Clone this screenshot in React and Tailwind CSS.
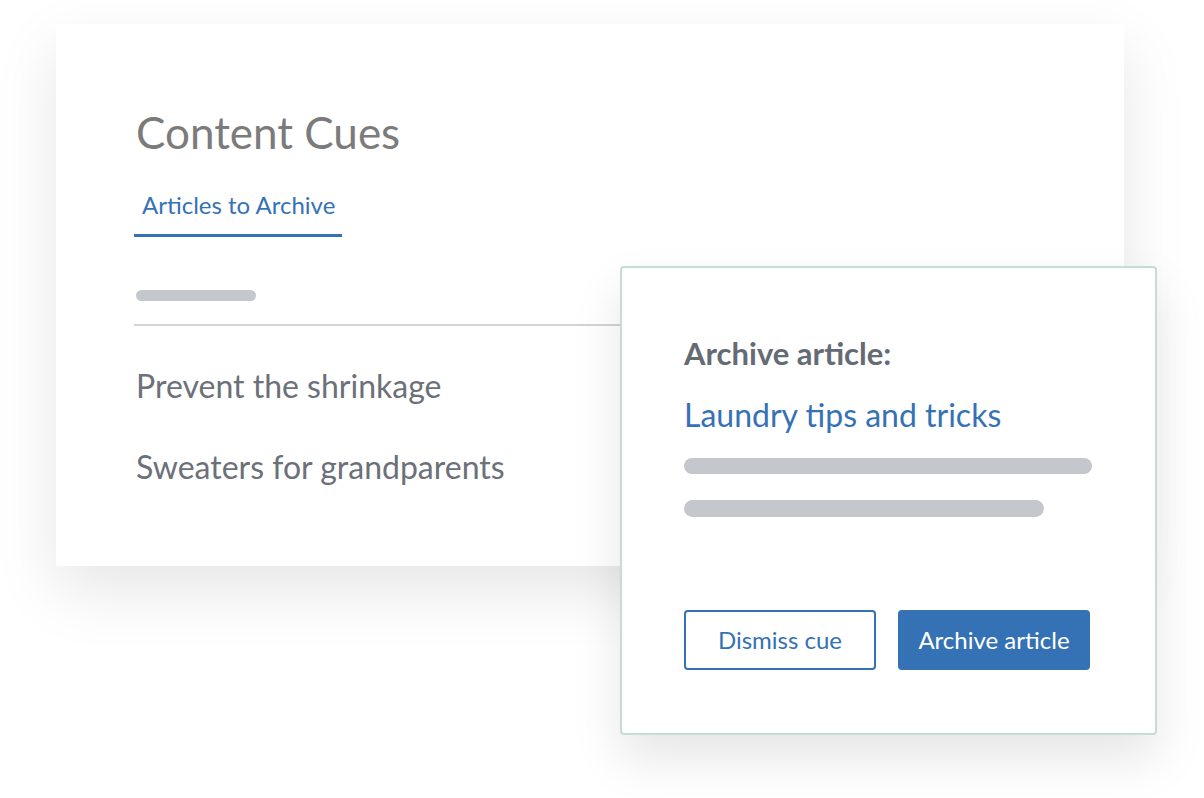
import React from "react";

export default function App() {
  return (
    <div className="relative w-[1204px] h-[798px] bg-white overflow-hidden" style={{ fontFamily: "Lato, 'Open Sans', sans-serif" }}>
      <div className="ml-[56px] mt-[24px] w-[1068px] h-[542px] bg-white shadow-[0_24px_60px_rgba(0,0,0,0.10)] pl-[80px] pt-[82px]">
        <h1 className="text-[44px] leading-[52px] text-[#7b7b7b] font-normal">Content Cues</h1>
        <div className="mt-[33px] w-[208px] -ml-[2px] border-b-[3px] border-[#3572b5] pb-[15px] pl-[8px]">
          <span className="block text-[24px] leading-[28px] text-[#3572b5]">Articles to Archive</span>
        </div>
        <div className="mt-[53px] w-[120px] h-[11px] rounded-full bg-[#c4c8cc]" />
        <div className="mt-[23px] w-[486px] -ml-[2px] h-[2px] bg-[#d3d3d3]" />
        <div className="mt-[41px] text-[32px] leading-[38px] text-[#6b7079]">Prevent the shrinkage</div>
        <div className="mt-[43px] text-[32px] leading-[38px] text-[#6b7079]">Sweaters for grandparents</div>
      </div>

      <div className="absolute left-[620px] top-[266px] w-[537px] h-[469px] bg-white border-2 border-[#c5ddd9] rounded-[4px] shadow-[0_24px_50px_rgba(0,0,0,0.10)] pl-[62px] pt-[66px]">
        <div className="text-[31px] leading-[38px] font-bold text-[#656b74]">Archive article:</div>
        <div className="mt-[24px] text-[32px] leading-[38px] text-[#3572b5]">Laundry tips and tricks</div>
        <div className="mt-[24px] w-[408px] h-[16px] rounded-full bg-[#c4c8cc]" />
        <div className="mt-[26px] w-[360px] h-[17px] rounded-full bg-[#c4c8cc]" />
        <div className="mt-[93px] flex gap-[22px]">
          <button className="w-[192px] h-[60px] border-2 border-[#3572b5] rounded-[4px] text-[24px] text-[#3572b5] bg-white">Dismiss cue</button>
          <button className="w-[192px] h-[60px] rounded-[4px] text-[24px] text-white bg-[#3572b5]">Archive article</button>
        </div>
      </div>
    </div>
  );
}
